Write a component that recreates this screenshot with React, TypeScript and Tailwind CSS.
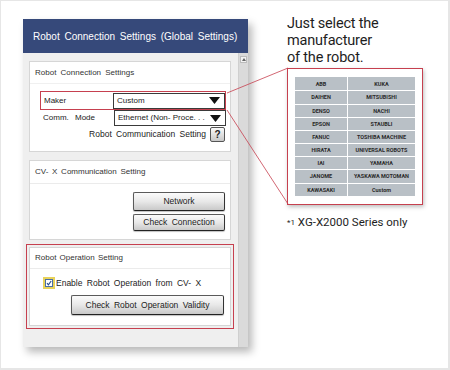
import React from "react";

const leftRows: [string, string][] = [
  ["ABB", "KUKA"],
  ["DAIHEN", "MITSUBISHI"],
  ["DENSO", "NACHI"],
  ["EPSON", "STAUBLI"],
  ["FANUC", "TOSHIBA MACHINE"],
  ["HIRATA", "UNIVERSAL ROBOTS"],
  ["IAI", "YAMAHA"],
  ["JANOME", "YASKAWA MOTOMAN"],
  ["KAWASAKI", "Custom"],
];

function Triangle() {
  return (
    <svg width="11" height="7" viewBox="0 0 11 7" className="shrink-0">
      <path d="M0 0 L11 0 L5.5 7 Z" fill="#111" />
    </svg>
  );
}

function Dropdown({ text }: { text: string }) {
  return (
    <div className="w-[112px] h-[16px] bg-white border border-[#3a3a3a] flex items-center justify-between pl-[3px] pr-[4px]">
      <span className="text-[8px] text-[#222] whitespace-nowrap">{text}</span>
      <Triangle />
    </div>
  );
}

function Btn({ children, w, h }: { children: React.ReactNode; w: string; h: string }) {
  return (
    <div
      className={`${w} ${h} flex items-center justify-center rounded-[2px] border border-[#5a5a5a] border-b-[#222] border-r-[#333] bg-gradient-to-b from-[#fbfbfb] via-[#e8e8e8] to-[#c9c9c9] text-[8.5px] text-[#222] [word-spacing:2px] shadow-[0_1px_1px_rgba(0,0,0,0.25)]`}
    >
      {children}
    </div>
  );
}

export default function App() {
  return (
    <div
      className="w-[450px] h-[370px] bg-white border-t border-l border-r-2 border-b-2 border-[#e6e6e6] relative flex overflow-hidden"
      style={{ fontFamily: '"Liberation Sans", Arial, sans-serif' }}
    >
      {/* Dialog window */}
      <div className="ml-[22px] mt-[18px] w-[225px] h-[328px] flex flex-col shadow-[4px_5px_8px_rgba(0,0,0,0.28)] shrink-0">
        <div className="h-[34px] bg-[#36497a] flex items-center pl-[10px] text-white text-[10px] [word-spacing:2px] whitespace-nowrap shrink-0">
          Robot Connection Settings (Global Settings)
        </div>
        <div className="flex flex-1">
          <div className="w-[215px] bg-[#efefef] flex flex-col pt-[8px] pl-[6px] pr-[7px]">
            {/* Panel 1 */}
            <div className="h-[91px] bg-white border border-[#d6d6d6] flex flex-col">
              <div className="h-[22px] border-b border-[#f0f0f0] flex items-center pl-[5px] text-[8px] text-[#333] [word-spacing:2px] shrink-0">
                Robot Connection Settings
              </div>
              <div className="ml-[10px] mt-[7px] w-[186px] h-[19px] border border-[#c6404f] flex items-center pl-[3px] pr-[0px] justify-between">
                <span className="text-[8px] text-[#222]">Maker</span>
                <Dropdown text="Custom" />
              </div>
              <div className="ml-[10px] w-[186px] flex items-center pl-[3px] justify-between h-[16px]">
                <span className="text-[8px] text-[#222] [word-spacing:4px]">Comm. Mode</span>
                <Dropdown text="Ethernet (Non- Proce. . ." />
              </div>
              <div className="flex items-center justify-end pr-[5px] mt-[1px] gap-[4px]">
                <span className="text-[8.5px] text-[#222] [word-spacing:2px]">Robot Communication Setting</span>
                <div className="w-[15px] h-[15px] rounded-[2px] border border-[#555] bg-gradient-to-b from-[#fafafa] to-[#c8c8c8] flex items-center justify-center text-[10px] font-bold text-[#222]">
                  ?
                </div>
              </div>
            </div>
            {/* Panel 2 */}
            <div className="mt-[8px] h-[80px] bg-white border border-[#d6d6d6] flex flex-col">
              <div className="h-[23px] border-b border-[#ebebeb] flex items-center pl-[5px] text-[8px] text-[#333] [word-spacing:1.5px] shrink-0">
                CV- X Communication Setting
              </div>
              <div className="flex flex-col items-end pr-[5px] pt-[8px] gap-[3px]">
                <Btn w="w-[92px]" h="h-[19px]">Network</Btn>
                <Btn w="w-[92px]" h="h-[17px]">Check Connection</Btn>
              </div>
            </div>
            {/* Panel 3 with red highlight */}
            <div className="mt-[4px] -mx-[3px] h-[85px] border border-[#c6404f] p-[2px] flex">
              <div className="flex-1 bg-white border border-[#d6d6d6] flex flex-col">
                <div className="h-[21px] border-b border-[#ebebeb] flex items-center pl-[5px] text-[8px] text-[#333] [word-spacing:1px] shrink-0">
                  Robot Operation Setting
                </div>
                <div className="flex items-center pl-[13px] mt-[8px] h-[12px]">
                  <div className="w-[12px] h-[12px] border-[2px] border-[#e8d25a] bg-white flex items-center justify-center">
                    <div className="w-[8px] h-[8px] border border-[#4a6fa8] flex items-center justify-center">
                      <svg width="6" height="6" viewBox="0 0 6 6">
                        <path d="M1 3.2 L2.4 4.8 L5.2 1" stroke="#2b4f8e" strokeWidth="1.2" fill="none" />
                      </svg>
                    </div>
                  </div>
                  <span className="ml-[1px] text-[8.5px] text-[#222] [word-spacing:2px]">Enable Robot Operation from CV- X</span>
                </div>
                <div className="flex justify-end pr-[6px] mt-[6px]">
                  <Btn w="w-[153px]" h="h-[20px]">Check Robot Operation Validity</Btn>
                </div>
              </div>
            </div>
          </div>
          {/* Scrollbar */}
          <div className="w-[10px] bg-[#dadada] border-l border-[#cfcfcf] flex flex-col items-center pt-[3px]">
            <div className="w-[7px] h-[7px] bg-[#f2f2f2] border border-[#bbb] flex items-center justify-center">
              <svg width="4" height="3" viewBox="0 0 4 3">
                <path d="M0 3 L2 0 L4 3 Z" fill="#666" />
              </svg>
            </div>
          </div>
        </div>
      </div>

      {/* Right column */}
      <div className="ml-[39px] mt-[14px] flex flex-col" style={{ fontFamily: 'Roboto, "Liberation Sans", sans-serif' }}>
        <div className="text-[14.5px] leading-[17px] text-[#1e1e1e] tracking-[-0.2px]">
          Just select the
          <br />
          manufacturer
          <br />
          of the robot.
        </div>
        <div className="mt-[2px] w-[136px] h-[137px] border border-[#c6404f] bg-white shadow-[1px_2px_4px_rgba(0,0,0,0.25)] flex items-center justify-center">
          <div className="w-[120px] bg-[#b9c0c6] flex flex-col">
            {leftRows.map(([a, b], i) => (
              <div key={a} className={`flex h-[13.2px] ${i > 0 ? "border-t border-white" : ""}`}>
                <div className="w-[53px] border-r border-white flex items-center justify-center text-[5.5px] font-bold text-[#2a2a2a] whitespace-nowrap">
                  {a}
                </div>
                <div className="flex-1 flex items-center justify-center text-[5.5px] font-bold text-[#2a2a2a] whitespace-nowrap">
                  {b}
                </div>
              </div>
            ))}
          </div>
        </div>
        <div className="mt-[9px] text-[11.5px] text-[#1e1e1e] whitespace-nowrap">
          <span className="text-[8px] align-[1px]">*1</span> XG-X2000 Series only
        </div>
      </div>

      {/* Callout lines */}
      <svg className="absolute left-0 top-0 pointer-events-none" width="450" height="370">
        <line x1="226" y1="92" x2="287" y2="67" stroke="#c6404f" strokeWidth="0.8" />
        <line x1="226" y1="109" x2="287" y2="203" stroke="#c6404f" strokeWidth="0.8" />
      </svg>
    </div>
  );
}
